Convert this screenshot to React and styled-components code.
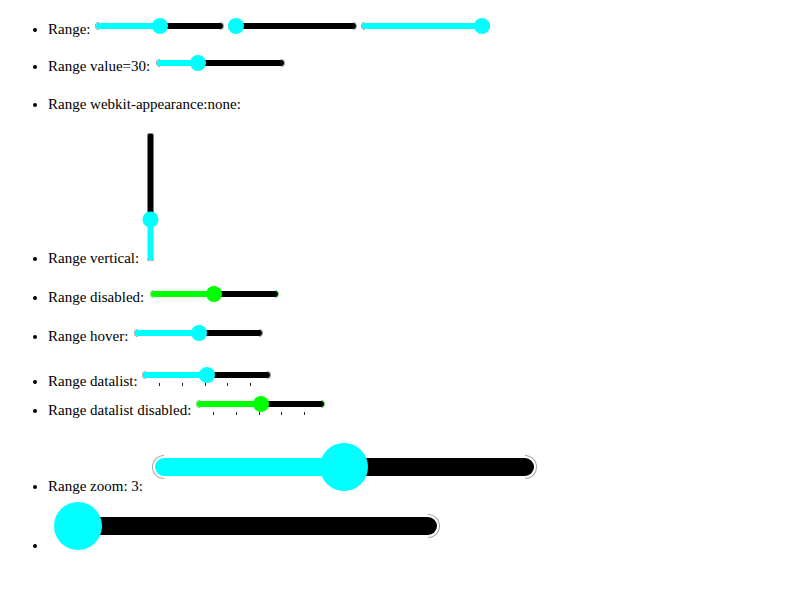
import React from 'react';
import styled, { createGlobalStyle } from 'styled-components';

const GlobalStyle = createGlobalStyle`
  body {
    margin: 0;
    background: #fff;
    color: #000;
    font-family: "Liberation Serif", "Times New Roman", Times, serif;
    font-size: 15px;
  }
`;

const List = styled.ul`
  margin: 16px 0 0;
  padding-left: 48px;
`;

const Item = styled.li`
  margin-bottom: ${p => p.$gap || 0}px;
`;

const Box = styled.span`
  display: inline-block;
  position: relative;
  vertical-align: baseline;
  width: ${p => 129 * p.$s}px;
  height: ${p => (p.$ticks ? 19 : 16) * p.$s}px;
  margin: ${p => (p.$flat ? '0' : `${2 * p.$s}px ${2 * p.$s}px 0 ${p.$ml ?? 2 * p.$s}px`)};
  visibility: ${p => (p.$hidden ? 'hidden' : 'visible')};
`;

const VBox = styled.span`
  display: inline-block;
  position: relative;
  vertical-align: baseline;
  width: 16px;
  height: 129px;
  margin: 4px 2px 2px 0;
`;

const Rotated = styled.span`
  position: absolute;
  display: flex;
  left: -56.5px;
  top: 56.5px;
  width: 129px;
  height: 16px;
  transform: rotate(-90deg);
`;

const Track = styled.span`
  position: absolute;
  z-index: 1;
  left: ${p => p.$inset}px;
  right: ${p => p.$inset}px;
  top: ${p => 5 * p.$s}px;
  height: ${p => 6 * p.$s}px;
  border-radius: ${p => 3 * p.$s}px;
  background: linear-gradient(
    to right,
    ${p => p.$fill} ${p => p.$stop}px,
    #000 ${p => p.$stop}px
  );
`;

const Cap = styled.span`
  position: absolute;
  z-index: 0;
  top: ${p => 4 * p.$s}px;
  width: ${p => 4 * p.$s}px;
  height: ${p => 8 * p.$s}px;
  box-sizing: border-box;
  border: 1px solid ${p => p.$ring};
  ${p => (p.$side === 'left'
    ? `left: ${p.$inset - p.$s}px; border-right: none; border-radius: ${4 * p.$s}px 0 0 ${4 * p.$s}px;`
    : `right: ${p.$inset - p.$s}px; border-left: none; border-radius: 0 ${4 * p.$s}px ${4 * p.$s}px 0;`)}
`;

const Thumb = styled.span`
  position: absolute;
  z-index: 2;
  top: 0;
  width: ${p => 16 * p.$s}px;
  height: ${p => 16 * p.$s}px;
  border-radius: 50%;
  background: ${p => p.$fill};
`;

const Tick = styled.span`
  position: absolute;
  top: 16px;
  width: 1px;
  height: 3px;
  background: #222;
`;

const TICKS = [0.1, 0.3, 0.5, 0.7, 0.9];

const Range = ({ value = 50, s = 1, disabled, ticks, hidden, flat, ml }) => {
  const v = value / 100;
  const inset = Math.round(1.33 * s);
  const center = 8 * s + v * 113 * s;
  const fill = disabled ? '#00ff00' : '#00ffff';
  const ring = disabled ? 'rgba(0, 200, 0, 0.55)' : 'rgba(0, 0, 0, 0.35)';
  return (
    <Box $s={s} $ticks={ticks} $hidden={hidden} $flat={flat} $ml={ml}>
      <Cap $side="left" $s={s} $inset={inset} $ring={ring} />
      <Cap $side="right" $s={s} $inset={inset} $ring={ring} />
      <Track $s={s} $inset={inset} $fill={fill} $stop={center - inset} />
      <Thumb $s={s} $fill={fill} style={{ left: center - 8 * s }} />
      {ticks && TICKS.map(t => (
        <Tick key={t} style={{ left: Math.round(8 + t * 113 - 2) }} />
      ))}
    </Box>
  );
};

const VerticalRange = ({ value }) => (
  <VBox>
    <Rotated>
      <Range value={value} flat />
    </Rotated>
  </VBox>
);

const App = () => {
  return (
    <>
      <GlobalStyle />
      <List>
        <Item $gap={15}>
          Range:{' '}
          <Range value={50} ml={1} /><Range value={0} /><Range value={100} />
        </Item>
        <Item $gap={16}>
          Range value=30:{' '}
          <Range value={30} />
        </Item>
        <Item $gap={15}>
          Range webkit-appearance:none:{' '}
          <Range hidden />
        </Item>
        <Item $gap={17}>
          Range vertical:{' '}
          <VerticalRange value={30} />
        </Item>
        <Item $gap={17}>
          Range disabled:{' '}
          <Range value={50} disabled />
        </Item>
        <Item $gap={20}>
          Range hover:{' '}
          <Range value={50} />
        </Item>
        <Item $gap={4}>
          Range datalist:{' '}
          <Range value={50} ticks ml={1} />
        </Item>
        <Item $gap={18}>
          Range datalist disabled:{' '}
          <Range value={50} ticks disabled ml={1} />
        </Item>
        <Item $gap={1}>
          Range zoom: 3:{' '}
          <Range value={50} s={3} ml={4} />
        </Item>
        <Item>
          <Range value={0} s={3} />
        </Item>
      </List>
    </>
  );
};

export default App;
